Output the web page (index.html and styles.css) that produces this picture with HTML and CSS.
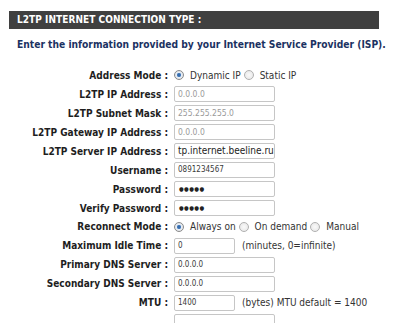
FILE: index.html
```html
<!DOCTYPE html>
<html>
<head>
<meta charset="utf-8">
<link rel="stylesheet" href="styles.css">
</head>
<body>
<div class="box">
  <div class="bar">L2TP INTERNET CONNECTION TYPE :</div>
  <p class="intro">Enter the information provided by your Internet Service Provider (ISP).</p>
  <div class="form">
    <div class="lbl">Address Mode :</div>
    <div class="fld"><span class="radio on"></span><span class="rt">Dynamic IP</span><span class="radio"></span><span class="rt">Static IP</span></div>

    <div class="lbl">L2TP IP Address :</div>
    <div class="fld"><span class="inp dis">0.0.0.0</span></div>

    <div class="lbl">L2TP Subnet Mask :</div>
    <div class="fld"><span class="inp dis">255.255.255.0</span></div>

    <div class="lbl">L2TP Gateway IP Address :</div>
    <div class="fld"><span class="inp dis">0.0.0.0</span></div>

    <div class="lbl">L2TP Server IP Address :</div>
    <div class="fld"><span class="inp big">tp.internet.beeline.ru</span></div>

    <div class="lbl">Username :</div>
    <div class="fld"><span class="inp">0891234567</span></div>

    <div class="lbl">Password :</div>
    <div class="fld"><span class="inp pw">●●●●●</span></div>

    <div class="lbl">Verify Password :</div>
    <div class="fld"><span class="inp pw">●●●●●</span></div>

    <div class="lbl">Reconnect Mode :</div>
    <div class="fld"><span class="radio on"></span><span class="rt">Always on</span><span class="radio"></span><span class="rt">On demand</span><span class="radio"></span><span class="rt">Manual</span></div>

    <div class="lbl">Maximum Idle Time :</div>
    <div class="fld"><span class="inp short">0</span><span class="note">(minutes, 0=infinite)</span></div>

    <div class="lbl">Primary DNS Server :</div>
    <div class="fld"><span class="inp">0.0.0.0</span></div>

    <div class="lbl">Secondary DNS Server :</div>
    <div class="fld"><span class="inp">0.0.0.0</span></div>

    <div class="lbl">MTU :</div>
    <div class="fld"><span class="inp short">1400</span><span class="note">(bytes) MTU default = 1400</span></div>

    <div class="lbl"></div>
    <div class="fld"><span class="inp"></span></div>
  </div>
</div>
</body>
</html>
```

FILE: styles.css
```css
html, body {
  margin: 0;
  padding: 0;
  background: #fff;
  overflow: hidden;
}
.box {
  padding: 11px 0 0 9px;
  width: 370px;
  font-family: "DejaVu Sans Condensed", "DejaVu Sans", sans-serif;
  font-stretch: condensed;
}
.bar {
  background: #404040;
  color: #fff;
  height: 18px;
  line-height: 18px;
  font-weight: bold;
  font-size: 10px;
  letter-spacing: 0.05px;
  padding-left: 8px;
}
.intro {
  margin: 9px 0 0 8px;
  line-height: 14px;
  color: #1b3262;
  font-weight: bold;
  font-size: 10.2px;
  white-space: nowrap;
}
.form {
  display: grid;
  grid-template-columns: 159px 1fr;
  grid-auto-rows: 18.95px;
  column-gap: 6px;
  margin-top: 14px;
  font-size: 10px;
}
.lbl {
  text-align: right;
  font-weight: bold;
  color: #1e1e1e;
  white-space: nowrap;
  display: flex;
  align-items: center;
  justify-content: flex-end;
}
.fld {
  display: flex;
  align-items: center;
  color: #333;
  white-space: nowrap;
}
.inp {
  box-sizing: border-box;
  width: 101px;
  height: 16px;
  border: 1px solid #c6c6c6;
  border-radius: 2px;
  font-size: 8px;
  line-height: 14px;
  padding-left: 3px;
  color: #3a3a3a;
  background: #fff;
  overflow: hidden;
}
.inp.dis { color: #9a9a9a; font-size: 8.5px; }
.inp.big { font-size: 10px; color: #222; }
.inp.pw { font-size: 6px; letter-spacing: 0.4px; color: #222; padding-left: 4px; }
.inp.short { width: 61px; }
.note {
  margin-left: 7px;
}
.radio {
  box-sizing: border-box;
  width: 10px;
  height: 10px;
  border-radius: 50%;
  border: 1px solid #b0b0b0;
  background: radial-gradient(circle, #fafafa 0, #e4e4e4 100%);
  margin-right: 6px;
  flex: none;
}
.radio.on {
  border-color: #8a8a8a;
  background: radial-gradient(circle, #2d5f9a 0, #4a7fbf 30%, #e8eef5 45%, #dcdcdc 100%);
}
.rt {
  margin-right: 3px;
}
```
